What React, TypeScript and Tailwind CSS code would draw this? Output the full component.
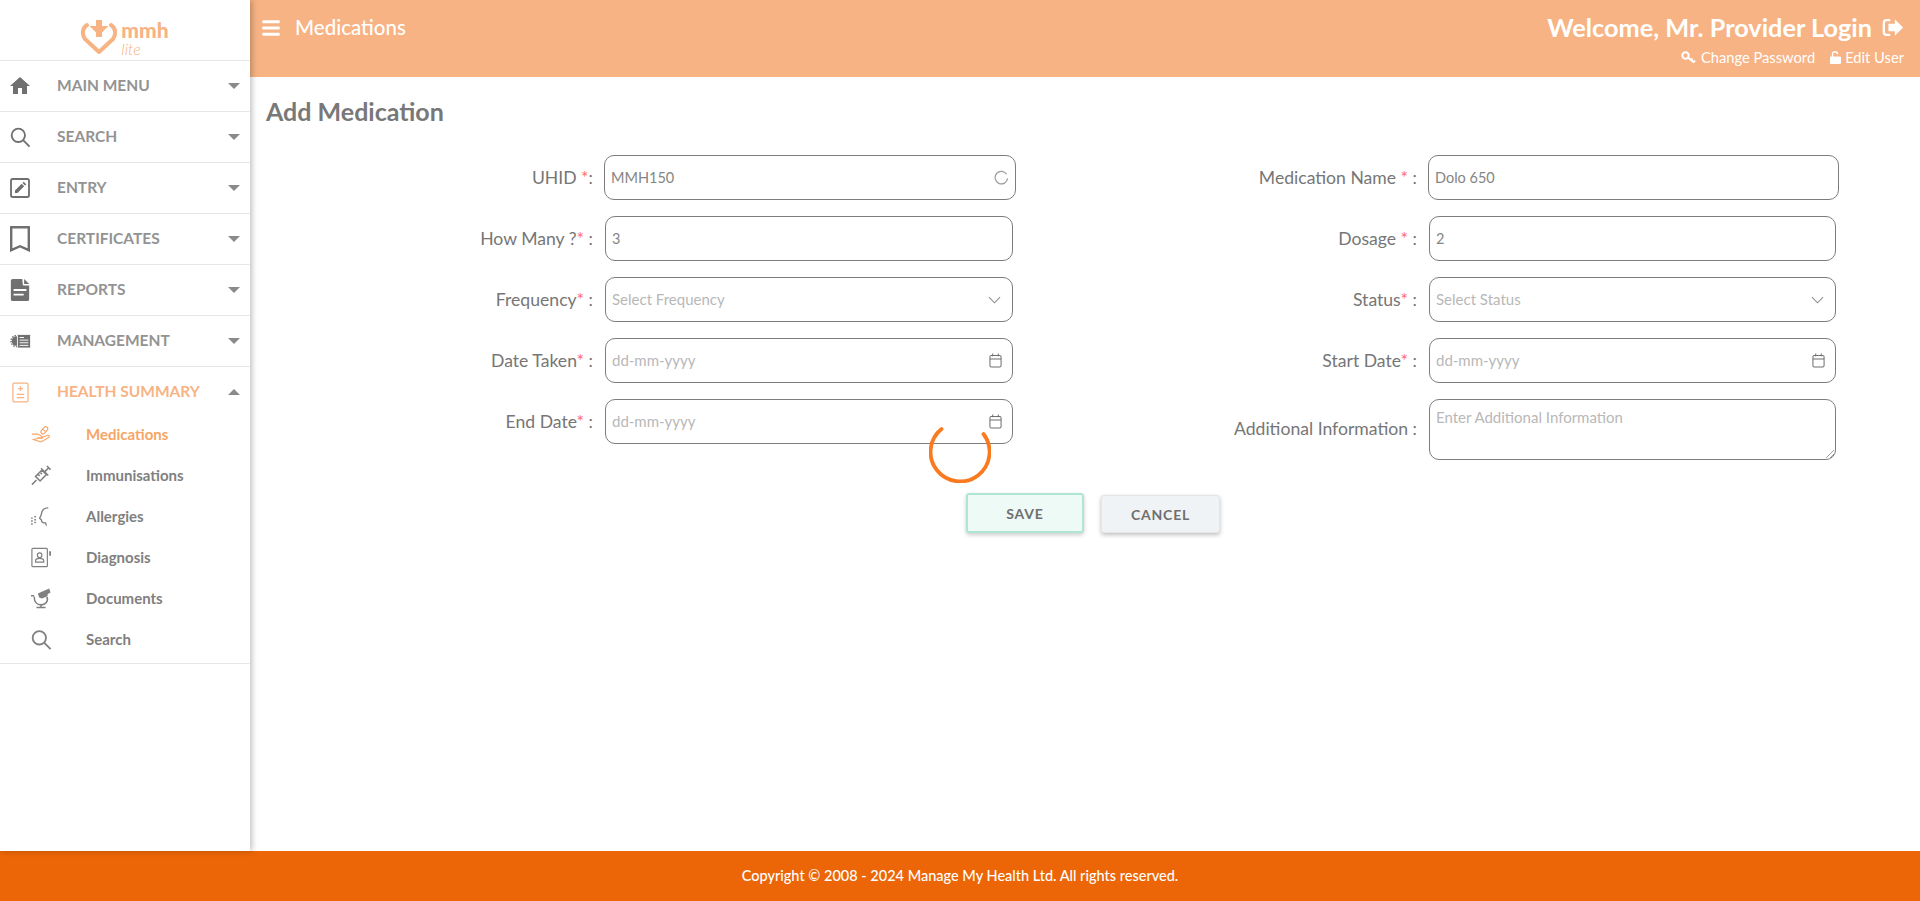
import React from 'react';
import { FaBars } from 'react-icons/fa';
import { MdHome } from 'react-icons/md';

const MENU = [
  { label: 'MAIN MENU', icon: 'home' },
  { label: 'SEARCH', icon: 'search' },
  { label: 'ENTRY', icon: 'entry' },
  { label: 'CERTIFICATES', icon: 'bookmark' },
  { label: 'REPORTS', icon: 'report' },
  { label: 'MANAGEMENT', icon: 'manage' },
];

const SUBMENU = [
  { label: 'Medications', icon: 'meds', active: true },
  { label: 'Immunisations', icon: 'syringe' },
  { label: 'Allergies', icon: 'allergy' },
  { label: 'Diagnosis', icon: 'diagnosis' },
  { label: 'Documents', icon: 'microscope' },
  { label: 'Search', icon: 'search' },
];

const MenuIcon: React.FC<{ name: string; className?: string }> = ({ name, className }) => {
  switch (name) {
    case 'home':
      return <MdHome className={className} />;
    case 'search':
      return (
        <svg viewBox="0 0 24 24" fill="none" stroke="currentColor" strokeWidth="2.2" className={className}>
          <circle cx="10" cy="10" r="8" />
          <path d="M16 16l7.5 7.5" />
        </svg>
      );
    case 'entry':
      return (
        <svg viewBox="0 0 24 24" fill="none" stroke="currentColor" className={className}>
          <rect x="1.2" y="1.2" width="21.6" height="21.6" rx="2" strokeWidth="2.2" />
          <path d="M6 18v-3l8-8 3 3-8 8zM15 6l1.5-1.5 3 3L18 9z" fill="currentColor" stroke="none" />
        </svg>
      );
    case 'bookmark':
      return (
        <svg viewBox="0 0 20 26" fill="none" stroke="currentColor" strokeWidth="2.4" className={className}>
          <path d="M1.2 1.2h17.6v23l-8.8-4-8.8 4z" />
        </svg>
      );
    case 'report':
      return (
        <svg viewBox="0 0 20 24" fill="currentColor" className={className}>
          <path d="M2 0h10.5l.5 6a1 1 0 001 1h6v15a2 2 0 01-2 2H2a2 2 0 01-2-2V2a2 2 0 012-2zM3 11v2h14v-2zm0 5v2h11v-2zM14.5 0L20 5.5h-5.5z" fillRule="evenodd" />
        </svg>
      );
    case 'manage':
      return (
        <svg viewBox="0 0 24 18" className={className}>
          <circle cx="7.5" cy="9" r="5.5" fill="currentColor" />
          <circle cx="7.5" cy="9" r="6.4" fill="none" stroke="currentColor" strokeWidth="1.6" strokeDasharray="1.6 1.4" />
          <rect x="8.5" y="1.5" width="15" height="15.5" rx="1" fill="currentColor" stroke="#fff" strokeWidth="1" />
          <path d="M11 5h5M11 8h10M11 11h10M11 14h10" stroke="#fff" strokeWidth="1.1" />
        </svg>
      );
    case 'health':
      return (
        <svg viewBox="0 0 18 22" fill="none" stroke="currentColor" strokeWidth="1.3" className={className}>
          <rect x="1" y="1" width="16" height="20" rx="1.5" />
          <path d="M9 4.5v5M6.5 7h5M5 13h8M5 16.5h8" />
        </svg>
      );
    case 'meds':
      return (
        <svg viewBox="0 0 24 22" fill="none" stroke="currentColor" strokeWidth="1.3" className={className}>
          <path d="M1 10.5h7l5 2.5c1.5 1 .5 3-1 2.5l-4-1" />
          <path d="M13 14.5l7-2.5c2-.5 3 1.500 1 2.500l-8 5c-1 .5-2 .5-3 0l-7-2.500z" />
          <rect x="13.5" y="1" width="5" height="10" rx="2.5" transform="rotate(40 16 6)" />
          <path d="M14 4.500l4 3.300" />
        </svg>
      );
    case 'syringe':
      return (
        <svg viewBox="0 0 22 22" fill="none" stroke="currentColor" strokeWidth="1.7" className={className}>
          <path d="M1 21l5-5M5 12l5 5 7-7-5-5zM11 3l8 8M15.5 6.5L20 2M17.5 .5l4 4M8 10l1.5 1.5M10.5 8L12 9.5" />
        </svg>
      );
    case 'allergy':
      return (
        <svg viewBox="0 0 22 22" fill="none" stroke="currentColor" className={className}>
          <path d="M19 1.5C15 1.5 12 4 11.5 8c0 2-1.5 3-2 5 1 1 2 1 2 2 0 3 3 3 4.500 3l1 3" strokeWidth="1.5" />
          <path d="M1 12v9M4.500 10.500v9" strokeWidth="1.8" strokeDasharray="1.6 1.6" />
        </svg>
      );
    case 'diagnosis':
      return (
        <svg viewBox="0 0 22 22" fill="none" stroke="currentColor" className={className}>
          <rect x="1" y="1" width="17" height="20" rx="1" strokeWidth="1.3" />
          <circle cx="9.5" cy="8.5" r="2.5" strokeWidth="1.3" />
          <path d="M5 16v-1.500c0-1.500 2-2.500 4.500-2.500s4.500 1 4.500 2.500V16z" strokeWidth="1.3" />
          <path d="M21 4v5" strokeWidth="2" />
        </svg>
      );
    case 'microscope':
      return (
        <svg viewBox="0 0 22 22" fill="none" stroke="currentColor" className={className}>
          <path d="M7.5 5.500L20 0l1.500 4.500-3 1.500-.5 2.500-6 2.500-3-1z" fill="currentColor" stroke="none" />
          <path d="M0 8h3.500M17.500 9c2 5-1.500 9-6.500 9-4 0-7.500-3-7.500-9M6 21h10M11 18v3" strokeWidth="1.7" />
        </svg>
      );
    default:
      return null;
  }
};

const Caret: React.FC<{ up?: boolean }> = ({ up }) => (
  <div
    className={
      up
        ? 'ml-auto mr-[10px] w-0 h-0 border-x-[6px] border-x-transparent border-b-[6px] border-b-[#8a8a8a]'
        : 'ml-auto mr-[10px] w-0 h-0 border-x-[6px] border-x-transparent border-t-[6px] border-t-[#8a8a8a]'
    }
  />
);

const iconSize = (name: string) => {
  if (name === 'bookmark') return 'w-[20px] h-[26px]';
  if (name === 'manage') return 'w-[21px] h-[16px]';
  if (name === 'home') return 'w-[24px] h-[24px] -ml-[2px]';
  return 'w-[20px] h-[22px]';
};

const Sidebar: React.FC = () => (
  <aside className="w-[250px] shrink-0 bg-white shadow-[2px_0_6px_rgba(0,0,0,0.25)] z-10">
    <div className="h-[60px] flex items-start justify-center pt-[20px]">
      <svg viewBox="0 0 36 34" className="w-[36px] h-[34px] text-[#f7b383]">
        <path d="M6 5C1.5 8 .5 14 4 19l14 13 14-13c3.500-5 2.500-11-2-14" fill="none" stroke="currentColor" strokeWidth="4" strokeLinejoin="round" strokeLinecap="round" />
        <path d="M15 0h6v6h6.500L21 12.500V17h-6v-4.500L8.500 6H15z" fill="currentColor" />
      </svg>
      <div className="ml-[4px] flex flex-col text-[#f7b383]">
        <span className="text-[21px] leading-[20px] font-black">mmh</span>
        <span className="text-[16px] leading-[16px] mt-[1px] italic font-light">lite</span>
      </div>
    </div>
    {MENU.map(m => (
      <div key={m.label} className="h-[51px] border-t border-[#e6e6e6] flex items-center text-[#939393] pb-[1px]">
        <div className="w-[57px] pl-[10px] shrink-0 text-[#707070]">
          <MenuIcon name={m.icon} className={iconSize(m.icon)} />
        </div>
        <span className="text-[15.5px] font-bold">{m.label}</span>
        <Caret />
      </div>
    ))}
    <div className="border-y border-[#e6e6e6] pb-[3px]">
      <div className="h-[47px] pt-[3px] flex items-center text-[#f7b383]">
        <div className="w-[57px] pl-[12px] shrink-0">
          <MenuIcon name="health" className="w-[17px] h-[21px]" />
        </div>
        <span className="text-[15.5px] font-bold">HEALTH SUMMARY</span>
        <Caret up />
      </div>
      {SUBMENU.map(s => (
        <div key={s.label} className={s.active ? 'h-[41px] flex items-center text-[#f7a565]' : 'h-[41px] flex items-center text-[#808080]'}>
          <div className="w-[86px] pl-[31px] shrink-0">
            <MenuIcon name={s.icon} className="w-[20px] h-[21px]" />
          </div>
          <span className="text-[15px] font-bold">{s.label}</span>
        </div>
      ))}
    </div>
  </aside>
);

const Header: React.FC = () => (
  <header className="h-[77px] shrink-0 bg-[#f7b383] text-white flex justify-between pl-[12px] pr-[16px]">
    <div className="flex items-start pt-[15px]">
      <FaBars className="w-[18px] h-[20px] mt-[3px]" />
      <span className="ml-[15px] text-[20.5px] font-medium leading-[24px]">Medications</span>
    </div>
    <div className="flex flex-col items-end pt-[13px]">
      <div className="flex items-center">
        <span className="text-[25.3px] font-bold leading-[28px]">Welcome, Mr. Provider Login</span>
        <svg viewBox="0 0 24 20" className="ml-[10px] w-[22px] h-[19px]" fill="none" stroke="currentColor">
          <path d="M9 2H5a3 3 0 00-3 3v10a3 3 0 003 3h4" strokeWidth="2.5" />
          <path d="M14 1l9 9-9 9v-5H7V6h7z" fill="currentColor" stroke="none" />
        </svg>
      </div>
      <div className="flex items-center mt-[8px] text-[14.7px] leading-[16px]">
        <svg viewBox="0 0 15 13" fill="none" stroke="currentColor" className="w-[15px] h-[13px]">
          <circle cx="4.500" cy="4.500" r="3.200" strokeWidth="2" />
          <path d="M7 6.500l6 5M10 9l1.500-1.500M12.500 11l1.500-1.500" strokeWidth="2" />
        </svg>
        <span className="ml-[5px]">Change Password</span>
        <svg viewBox="0 0 12 14" className="ml-[15px] w-[11px] h-[13px]" fill="currentColor">
          <path d="M1 6h1V3.500a3.500 3.500 0 017 0H7.500a2 2 0 00-4 0V6H11a1 1 0 011 1v6a1 1 0 01-1 1H1a1 1 0 01-1-1V7a1 1 0 011-1z" />
        </svg>
        <span className="ml-[4px]">Edit User</span>
      </div>
    </div>
  </header>
);

const CalendarIcon: React.FC = () => (
  <svg viewBox="0 0 14 16" fill="none" stroke="#6f6f6f" strokeWidth="1.1" className="w-[13px] h-[15px]">
    <rect x="1" y="2.5" width="12" height="12.5" rx="1.5" />
    <path d="M1 6.5h12M4 .5v3M10 .5v3" />
  </svg>
);

const Label: React.FC<{ text: string }> = ({ text }) => (
  <span>
    {text}
    <span className="text-[#ff6b6b]">*</span>
    {' :'}
  </span>
);

const Row: React.FC<{ label: React.ReactNode; width: string; right?: React.ReactNode; text?: string; placeholder?: string }> = ({ label, width, right, text, placeholder }) => (
  <div className="h-[61px] flex">
    <label className="flex-1 text-right text-[17.6px] text-[#767676] pt-[11px] leading-[24px]">{label}</label>
    <div className={`${width} h-[45px] border border-[#7d7d7d] rounded-[10px] flex items-center justify-between pl-[6px] pr-[10px]`}>
      {text ? <span className="text-[14.5px] text-[#858585]">{text}</span> : <span className="text-[15px] text-[#b8b8b8]">{placeholder}</span>}
      {right}
    </div>
  </div>
);

const chevron = (
  <svg viewBox="0 0 14 8" fill="none" stroke="#8a8a8a" strokeWidth="1.1" className="w-[13px] h-[8px] mr-[1px]">
    <path d="M1 1l6 6 6-6" />
  </svg>
);

const Form: React.FC = () => (
  <div className="flex mt-[28px]">
    <div className="w-[763px] flex flex-col">
      <div className="h-[61px] flex">
        <label className="flex-1 text-right text-[17.6px] text-[#767676] pt-[11px] leading-[24px]">UHID <span className="text-[#ff6b6b]">*</span>:</label>
        <div className="w-[412px] ml-[11px] mr-[-3px] h-[45px] border border-[#7d7d7d] rounded-[10px] flex items-center justify-between pl-[6px] pr-[6px] text-[14.5px] text-[#858585]">
          MMH150
          <svg viewBox="0 0 16 16" fill="none" stroke="#9c9c9c" strokeWidth="1.3" className="w-[15px] h-[15px]">
            <path d="M13.5 4.500A6.700 6.700 0 1014.500 9" />
          </svg>
        </div>
      </div>
      <Row label={<Label text="How Many ?" />} width="w-[408px] ml-[12px]" text="3" />
      <Row label={<Label text="Frequency" />} width="w-[408px] ml-[12px]" placeholder="Select Frequency" right={chevron} />
      <Row label={<Label text="Date Taken" />} width="w-[408px] ml-[12px]" placeholder="dd-mm-yyyy" right={<CalendarIcon />} />
      <Row label={<Label text="End Date" />} width="w-[408px] ml-[12px]" placeholder="dd-mm-yyyy" right={<CalendarIcon />} />
    </div>
    <div className="w-[823px] flex flex-col">
      <div className="h-[61px] flex">
        <label className="flex-1 text-right text-[17.6px] text-[#767676] pt-[11px] leading-[24px]">Medication Name <span className="text-[#ff6b6b]">*</span> :</label>
        <div className="w-[411px] ml-[11px] mr-[-3px] h-[45px] border border-[#7d7d7d] rounded-[10px] flex items-center pl-[6px] text-[14.5px] text-[#858585]">Dolo 650</div>
      </div>
      <Row label={<span>Dosage <span className="text-[#ff6b6b]">*</span> :</span>} width="w-[407px] ml-[12px]" text="2" />
      <Row label={<Label text="Status" />} width="w-[407px] ml-[12px]" placeholder="Select Status" right={chevron} />
      <Row label={<Label text="Start Date" />} width="w-[407px] ml-[12px]" placeholder="dd-mm-yyyy" right={<CalendarIcon />} />
      <div className="h-[61px] flex">
        <label className="flex-1 text-right text-[17.6px] text-[#767676] pt-[18px] leading-[24px]">Additional Information :</label>
        <div className="w-[407px] ml-[12px] h-[61px] border border-[#7d7d7d] rounded-[10px] pl-[6px] pt-[8px] text-[15px] leading-[18px] text-[#b8b8b8] relative">
          Enter Additional Information
          <svg viewBox="0 0 8 8" stroke="#8a8a8a" strokeWidth="0.8" className="w-[8px] h-[8px] absolute right-[1px] bottom-[1px]">
            <path d="M0 8l8-8M4 8l4-4" />
          </svg>
        </div>
      </div>
    </div>
  </div>
);

export default function App() {
  return (
    <div className="h-[901px] flex flex-col overflow-hidden bg-white font-['Lato','Liberation_Sans',sans-serif]">
      <div className="flex-1 flex min-h-0">
        <Sidebar />
        <main className="flex-1 flex flex-col relative">
          <Header />
          <div className="flex-1">
            <h1 className="ml-[16px] mt-[18px] text-[25px] leading-[32px] font-bold text-[#787878]">Add Medication</h1>
            <Form />
            <div className="flex ml-[716px] mt-[33px] items-start">
              <button className="w-[118px] h-[40px] bg-[#eefaf6] border-2 border-[#aee6d2] rounded-[3px] shadow-[0_2px_4px_rgba(0,0,0,0.2)] text-[14px] font-bold text-[#6f6f6f] tracking-[0.8px]">SAVE</button>
              <button className="w-[119px] h-[38px] ml-[17px] mt-[2px] bg-[#f0f3f5] border border-[#e3e6e8] rounded-[3px] shadow-[0_2px_4px_rgba(0,0,0,0.25)] text-[14px] font-bold text-[#6f6f6f] tracking-[0.8px]">CANCEL</button>
            </div>
          </div>
          <div className="absolute left-[679px] top-[421px] w-[62px] h-[62px]">
            <svg viewBox="0 0 62 62" fill="none" stroke="#f97a1f" strokeWidth="3.8" strokeLinecap="round" className="w-full h-full">
              <path d="M12.5 8A29.5 29.5 0 1054.5 13" />
            </svg>
          </div>
        </main>
      </div>
      <footer className="h-[50px] shrink-0 bg-[#ec6607] text-white text-[14.5px] font-medium flex items-center justify-center">
        Copyright © 2008 - 2024 Manage My Health Ltd. All rights reserved.
      </footer>
    </div>
  );
}
